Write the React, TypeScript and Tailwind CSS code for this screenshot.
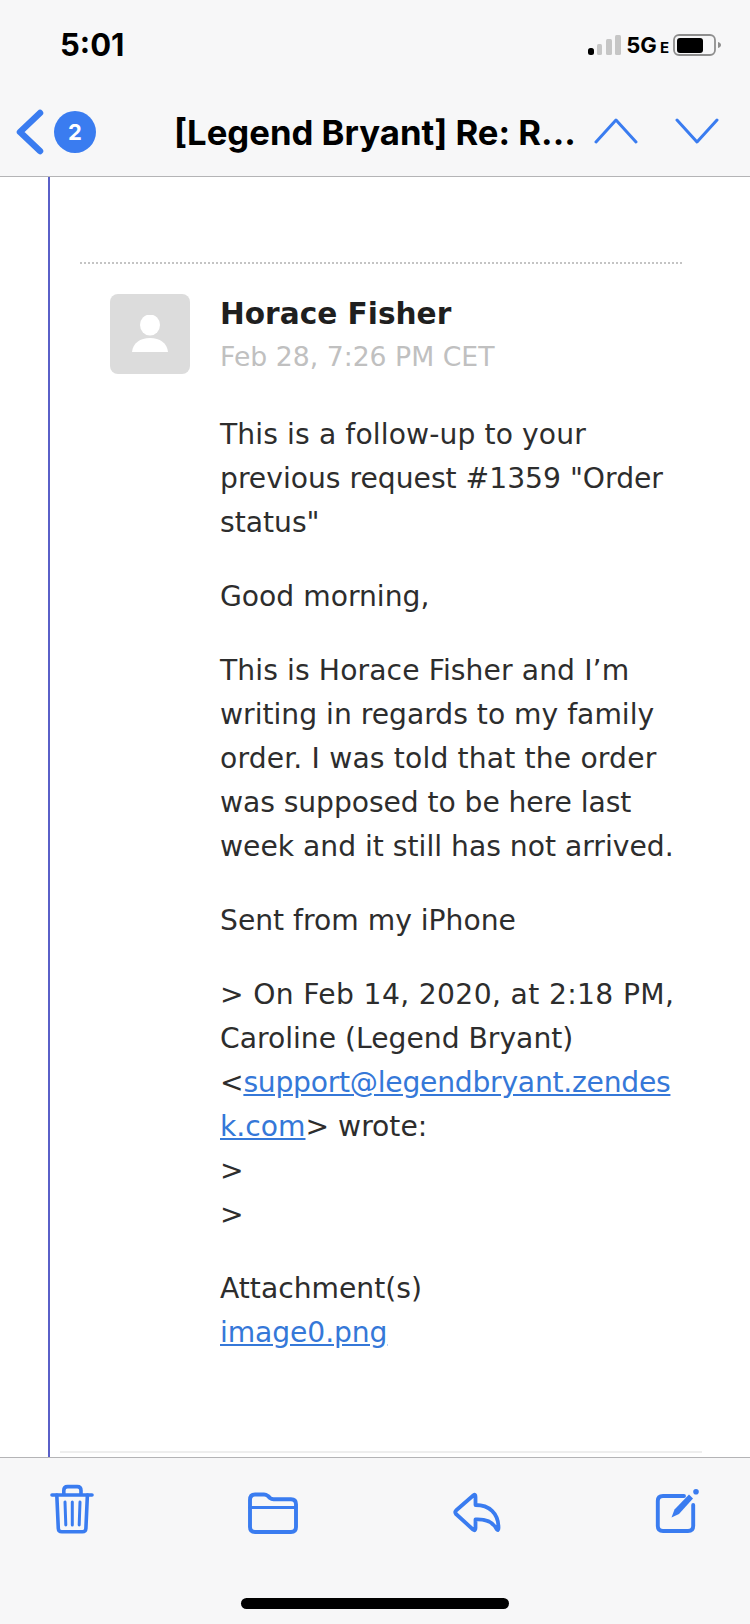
import React from "react";

const BLUE = "#3a7cf0";

function Line({ children, className = "" }: { children: React.ReactNode; className?: string }) {
  return <div className={`h-[44px] leading-[44px] whitespace-nowrap ${className}`}>{children}</div>;
}

export default function App() {
  return (
    <div className="w-[750px] h-[1624px] bg-white flex flex-col overflow-hidden relative">
      <header className="h-[177px] shrink-0 bg-[#f7f7f8] border-b border-[#b4b4b6] relative font-['Inter',sans-serif]">
        <div className="h-[110px] flex items-start justify-between">
          <span className="ml-[60px] mt-[27px] text-[31px] leading-[36px] font-bold text-black">5:01</span>
          <div className="mt-[35px] mr-[29px] flex items-start">
            <svg width="34" height="21" viewBox="0 0 34 21">
              <rect x="0" y="13" width="6" height="7" rx="2.5" fill="#000" />
              <rect x="9" y="9" width="5" height="11" rx="1.5" fill="#c6c6c6" />
              <rect x="18" y="4" width="6" height="16" rx="1.5" fill="#c6c6c6" />
              <rect x="27" y="0" width="6" height="20" rx="1.5" fill="#c6c6c6" />
            </svg>
            <span className="ml-[4px] mt-[-1px] text-[22px] leading-[22px] font-bold text-black">5G</span>
            <span className="ml-[3px] mt-[4px] text-[15px] leading-[18px] font-bold text-black">E</span>
            <svg width="48" height="22" viewBox="0 0 48 22" className="ml-[4px] -mt-[1px]">
              <rect x="1" y="1" width="41" height="20" rx="5" fill="none" stroke="#8e8e8e" strokeWidth="1.8" />
              <rect x="4" y="4" width="26" height="15" rx="3" fill="#000" />
              <path d="M45 8c2 .6 3 1.6 3 3s-1 2.4-3 3z" fill="#8e8e8e" />
            </svg>
          </div>
        </div>
        <div className="flex items-center h-[44px] relative">
          <svg width="30" height="46" viewBox="0 0 30 46" className="ml-[15px] shrink-0">
            <path d="M25 4 5 23l20 19" fill="none" stroke={BLUE} strokeWidth="6.5" strokeLinecap="round" strokeLinejoin="round" />
          </svg>
          <span className="ml-[9px] w-[42px] h-[42px] shrink-0 rounded-full bg-[#3a7cf0] text-white text-[22px] font-bold flex items-center justify-center">2</span>
          <span className="ml-[78px] text-[34.7px] leading-[44px] font-bold text-black whitespace-nowrap">[Legend Bryant] Re: R...</span>
          <svg width="44" height="26" viewBox="0 0 44 26" className="absolute left-[594px] top-[8px]">
            <path d="M2 24 22 2l20 22" fill="none" stroke={BLUE} strokeWidth="3" strokeLinecap="round" strokeLinejoin="round" />
          </svg>
          <svg width="44" height="26" viewBox="0 0 44 26" className="absolute left-[675px] top-[8px]">
            <path d="M2 2l20 22L42 2" fill="none" stroke={BLUE} strokeWidth="3" strokeLinecap="round" strokeLinejoin="round" />
          </svg>
        </div>
      </header>

      <main className="flex-1 flex min-h-0 relative">
        <div className="ml-[48px] w-[2px] bg-[#5a60c8] shrink-0" />
        <div className="flex-1 relative pt-[85px] font-['DejaVu_Sans',sans-serif]">
          <div className="ml-[30px] w-[602px] border-t-2 border-dotted border-[#c4c4c4]" />
          <div className="flex mt-[30px] ml-[60px]">
            <div className="w-[80px] h-[80px] rounded-[8px] bg-[#dcdcdc] flex items-center justify-center shrink-0">
              <svg width="36" height="38" viewBox="0 0 36 38">
                <ellipse cx="18" cy="10" rx="10" ry="10.5" fill="#fff" />
                <path d="M0 37c1-9 8-14 18-14s17 5 18 14z" fill="#fff" />
              </svg>
            </div>
            <div className="ml-[30px] w-[460px]">
              <div className="text-[29.6px] leading-[38px] font-bold text-[#1f1f1f] mt-[1px]">Horace Fisher</div>
              <div className="text-[26.7px] leading-[40px] text-[#c0c0c0] mt-[4px]">Feb 28, 7:26 PM CET</div>
              <div className="text-[28.2px] text-[#2d2d2d] mt-[36px] flex flex-col gap-[30px]">
                <div>
                  <Line className="tracking-[0.11px]">This is a follow-up to your</Line>
                  <Line>previous request #1359 "Order</Line>
                  <Line>status"</Line>
                </div>
                <Line>Good morning,</Line>
                <div>
                  <Line className="tracking-[0.1px]">This is Horace Fisher and I’m</Line>
                  <Line>writing in regards to my family</Line>
                  <Line className="tracking-[0.16px]">order. I was told that the order</Line>
                  <Line className="tracking-[-0.07px]">was supposed to be here last</Line>
                  <Line>week and it still has not arrived.</Line>
                </div>
                <Line>Sent from my iPhone</Line>
                <div>
                  <Line className="tracking-[0.35px]">&gt; On Feb 14, 2020, at 2:18 PM,</Line>
                  <Line>Caroline (Legend Bryant)</Line>
                  <Line className="tracking-[-0.25px]">&lt;<span className="text-[#3578d8] underline">support@legendbryant.zendes</span></Line>
                  <Line><span className="text-[#3578d8] underline">k.com</span>&gt; wrote:</Line>
                  <Line>&gt;</Line>
                  <Line>&gt;</Line>
                </div>
                <div>
                  <Line>Attachment(s)</Line>
                  <Line className="tracking-[-0.1px]"><span className="text-[#3578d8] underline">image0.png</span></Line>
                </div>
              </div>
            </div>
          </div>
          <div className="absolute left-[10px] right-[48px] bottom-[4px] h-[2px] bg-[#eeeeee]" />
        </div>
      </main>

      <footer className="h-[167px] shrink-0 bg-[#f7f7f8] border-t border-[#b4b4b6] relative">
        <div className="flex items-end justify-between pl-[50px] pr-[51px] h-[76px]">
          <svg width="44" height="50" viewBox="0 0 44 50" fill="none" stroke={BLUE} strokeLinecap="round" strokeLinejoin="round">
            <path d="M2 11h40" strokeWidth="3.6" />
            <path d="M13.8 10V6.5Q13.8 2.6 17.5 2.6h9.8Q31 2.6 31 6.5V10" strokeWidth="3.6" />
            <path d="M6.8 11 8.3 44.5q.2 3.3 3.5 3.3h20.6q3.3 0 3.5-3.3L37.4 11" strokeWidth="3.6" />
            <path d="M15 18l.8 23M22.3 18v23M30 18l-.8 23" strokeWidth="3" />
          </svg>
          <svg width="50" height="42" viewBox="0 0 50 42" fill="none" stroke={BLUE} strokeWidth="3.9" strokeLinecap="round" strokeLinejoin="round">
            <path d="M2 8Q2 2.5 7 2.5h9q2 0 4 1.5l2 2q1.5 1.2 3.5 1.2H43q5 0 5 5V35q0 5-5 5H7q-5 0-5-5z" />
            <path d="M2 15.5h46" strokeWidth="3.2" />
          </svg>
          <svg width="48" height="42" viewBox="0 0 48 42" fill="none" stroke={BLUE} strokeWidth="3.8" strokeLinecap="round" strokeLinejoin="round">
            <path d="M20.5 3.2q2-1.4 2 1.8V13c13.5 0 23 8 23 23q0 3.5-2 1c-3.5-7-10.5-10-21-9.5V36q0 3.5-2.5 1.5L3 22q-1.5-2 0-3.5z" />
          </svg>
          <svg width="44" height="46" viewBox="0 0 44 46" fill="none" stroke={BLUE} strokeWidth="3.9" strokeLinecap="round" strokeLinejoin="round">
            <path d="M29 8H8Q2.8 8 2.8 13V38Q2.8 43 8 43H33Q38.2 43 38.2 38V17" />
            <path d="M16.5 29.5l3-8L34 6.5l4 4L24 26z" fill={BLUE} stroke="none" />
            <circle cx="41" cy="3.7" r="2.8" fill={BLUE} stroke="none" />
          </svg>
        </div>
        <div className="absolute left-[241px] top-[140px] w-[268px] h-[11px] rounded-full bg-black" />
      </footer>
    </div>
  );
}
